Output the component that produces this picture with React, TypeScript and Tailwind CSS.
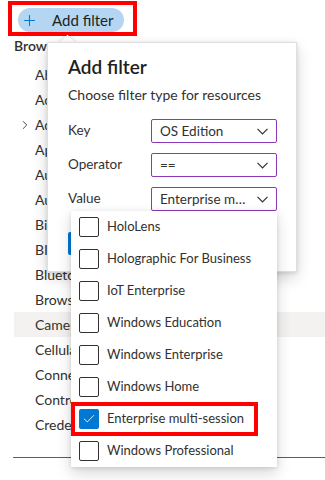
import { Plus, ChevronRight, Check } from 'lucide-react';

const categories = [
  'Above Lock',
  'Accounts',
  'Administrative Templates',
  'Application Defaults',
  'Audit',
  'Authentication',
  'BitLocker',
  'BITS',
  'Bluetooth',
  'Browser',
  'Camera',
  'Cellular',
  'Connectivity',
  'Control Policy Conflict',
  'Credential Providers',
];

const editions = [
  { name: 'HoloLens', checked: false },
  { name: 'Holographic For Business', checked: false },
  { name: 'IoT Enterprise', checked: false },
  { name: 'Windows Education', checked: false },
  { name: 'Windows Enterprise', checked: false },
  { name: 'Windows Home', checked: false },
  { name: 'Enterprise multi-session', checked: true },
  { name: 'Windows Professional', checked: false },
];

function Select({ value }: { value: string }) {
  return (
    <div className="w-[126px] h-[24px] border border-[#8a3ab9] rounded-[2px] flex items-center pl-[8px] pr-[8px] text-[13.5px] text-[#323130]">
      <span className="flex-1 min-w-0 truncate pr-[8px]">{value}</span>
      <svg width="11" height="7" viewBox="0 0 11 7" className="shrink-0">
        <polyline points="0.5,0.8 5.5,5.8 10.5,0.8" fill="none" stroke="#323130" strokeWidth="1.2" />
      </svg>
    </div>
  );
}

export default function App() {
  return (
    <div className="relative w-[325px] h-[480px] bg-white overflow-hidden font-['Lato',sans-serif] text-[#323130]">
      {/* toolbar */}
      <div className="pt-[1px] pl-[8px]">
        <div className="w-[129px] h-[35px] border-[4px] border-[#ff0000] pl-[6px] pt-[3px]">
          <button className="w-[106px] h-[24px] rounded-full bg-[#b4d6f2] flex items-center pl-[3px] gap-[14px] text-[15px] text-[#201f1e]">
            <Plus size={17} strokeWidth={1.5} className="text-[#0078d4]" />
            <span>Add filter</span>
          </button>
        </div>
      </div>

      <div className="h-[20px] leading-[20px] pl-[14px] text-[14px] font-semibold whitespace-nowrap">Browse by category</div>

      <ul className="mt-[6px] pl-[14px]">
        {categories.map((c) => (
          <li
            key={c}
            className={`h-[25px] flex items-center text-[14px] whitespace-nowrap ${c === 'Camera' ? 'bg-[#f3f2f1]' : ''}`}
          >
            <span className="w-[21px] flex justify-center">
              {c === 'Administrative Templates' && <ChevronRight size={14} strokeWidth={1.5} />}
            </span>
            <span>{c}</span>
          </li>
        ))}
      </ul>

      <div className="mt-[20px] ml-[13px] border-t border-[#605e5c]" />

      {/* callout beak */}
      <div className="absolute left-[62px] top-[37px] w-[11px] h-[11px] rotate-45 bg-white shadow-[0_0_4px_rgba(0,0,0,0.18)]" />

      {/* add filter callout */}
      <div className="absolute left-[47px] top-[42px] w-[250px] h-[230px] bg-white border border-[#e1dfdd] shadow-[0_6px_14px_rgba(0,0,0,0.16),0_1px_4px_rgba(0,0,0,0.12)] pl-[20px] pt-[11px]">
        <h2 className="text-[19px] leading-[26px] font-semibold text-[#201f1e]">Add filter</h2>
        <p className="mt-[5px] text-[14px] leading-[20px]">Choose filter type for resources</p>

        <div className="mt-[14px] flex flex-col gap-[10px]">
          <div className="flex items-start">
            <span className="w-[83px] h-[22px] leading-[22px] text-[13.5px]">Key</span>
            <Select value="OS Edition" />
          </div>
          <div className="flex items-start">
            <span className="w-[83px] h-[22px] leading-[22px] text-[13.5px]">Operator</span>
            <Select value="==" />
          </div>
          <div className="flex items-start">
            <span className="w-[83px] h-[22px] leading-[22px] text-[13.5px]">Value</span>
            <Select value="Enterprise multi-session" />
          </div>
        </div>

        <button className="mt-[21px] w-[80px] h-[23px] rounded-[2px] bg-[#0078d4] text-white text-[14px]">Apply</button>
      </div>

      {/* value options dropdown */}
      <ul className="absolute left-[71px] top-[211px] w-[206px] bg-white shadow-[0_6px_14px_rgba(0,0,0,0.16),0_1px_4px_rgba(0,0,0,0.12)]">
        {editions.map((e) => (
          <li key={e.name} className="h-[32px] flex items-center pl-[8px] gap-[8px] text-[13px] text-[#323130]">
            {e.checked ? (
              <span className="w-[20px] h-[20px] rounded-[2px] bg-[#0078d4] flex items-center justify-center">
                <Check size={14} strokeWidth={1.5} className="text-white" />
              </span>
            ) : (
              <span className="w-[20px] h-[20px] rounded-[2px] border border-[#323130]" />
            )}
            <span>{e.name}</span>
          </li>
        ))}
      </ul>

      {/* highlight around selected option */}
      <div className="absolute left-[71px] top-[402px] w-[187px] h-[34px] border-[4px] border-[#ff0000]" />
    </div>
  );
}
